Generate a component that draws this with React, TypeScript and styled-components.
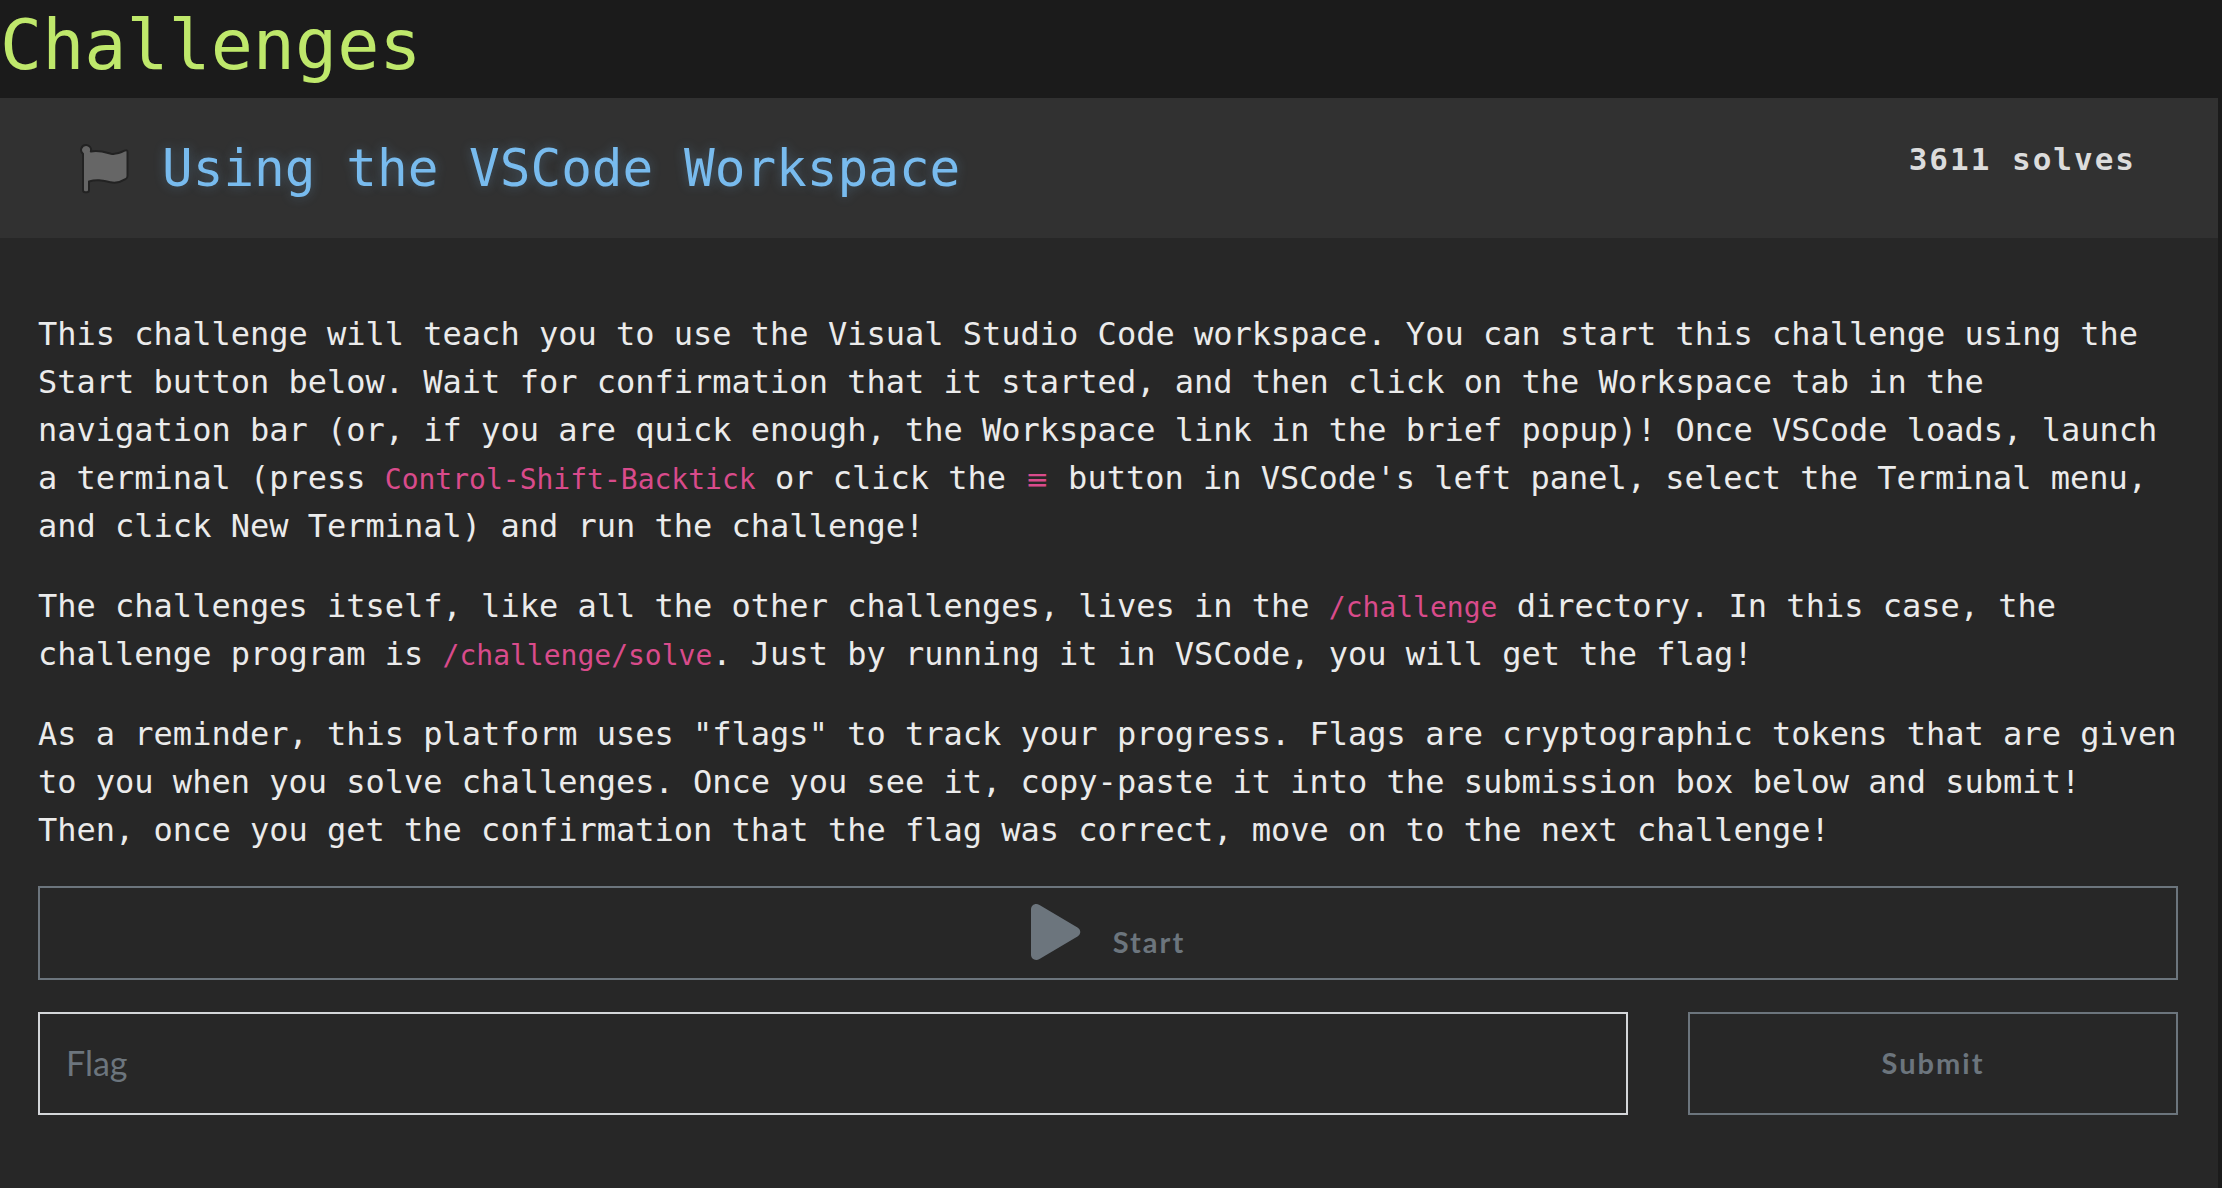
import React from "react";
import styled, { createGlobalStyle } from "styled-components";

const mono = `"DejaVu Sans Mono", "Liberation Mono", monospace`;
const sans = `Lato, "Open Sans", sans-serif`;

const GlobalStyle = createGlobalStyle`
  *, *::before, *::after { box-sizing: border-box; }
  body {
    margin: 0;
    background: #1b1b1b;
    color: #ebebeb;
    font-family: ${mono};
    font-size: 32px;
    line-height: 48px;
  }
`;

const Page = styled.main`
  min-height: 100vh;
  display: flex;
  flex-direction: column;
`;

const PageTitle = styled.h1`
  margin: 0;
  padding-bottom: 8px;
  color: #bfe86b;
  font-size: 70px;
  line-height: 90px;
  font-weight: 400;
`;

const Card = styled.article`
  flex: 1;
  margin-right: 4px;
  background: #272727;
`;

const CardHeader = styled.header`
  display: flex;
  align-items: flex-start;
  justify-content: space-between;
  padding: 41px 82px 39px 80px;
  background: #313131;
`;

const CardTitle = styled.h2`
  display: flex;
  align-items: center;
  gap: 32px;
  margin: 0;
  color: #78bbee;
  font-size: 51px;
  line-height: 60px;
  font-weight: 400;
  text-shadow: 0 0 12px rgba(120, 187, 238, 0.3);
`;

const Solves = styled.strong`
  color: #dcdcdc;
  font-size: 31px;
  line-height: 40px;
  letter-spacing: 2px;
`;

const CardBody = styled.div`
  padding: 72px 40px 72px 38px;
`;

const Paragraph = styled.p`
  margin: 0 0 32px;
`;

const Code = styled.code<{ $symbol?: boolean }>`
  color: #d94b8b;
  font-family: ${(p) => (p.$symbol ? `"DejaVu Sans", sans-serif` : mono)};
  font-size: 28px;
  line-height: 28px;
`;

const OutlineButton = styled.button<{ $tall?: boolean }>`
  display: flex;
  align-items: center;
  justify-content: center;
  gap: 32px;
  width: 100%;
  height: ${(p) => (p.$tall ? 103 : 94)}px;
  padding: 0 0 2px;
  border: 2px solid #6c757d;
  border-radius: 0;
  background: transparent;
  color: #6c757d;
  font-family: ${sans};
  font-size: 29px;
  font-weight: 700;
  letter-spacing: 2px;
  cursor: pointer;
`;

const ButtonLabel = styled.span`
  padding-top: 18px;
`;

const FormRow = styled.form`
  display: flex;
  margin: 32px -30px 0;
`;

const Column = styled.div<{ $share: number }>`
  width: ${(p) => p.$share}%;
  padding: 0 30px;
`;

const FlagInput = styled.input`
  width: 100%;
  height: 103px;
  padding: 0 26px 2px;
  border: 2px solid #d4d6d9;
  border-radius: 0;
  background: transparent;
  color: #ebebeb;
  font-family: ${sans};
  font-size: 34px;
  outline: none;
  &::placeholder { color: #6c757d; opacity: 1; }
`;

const FlagIcon = () => (
  <svg width="50" height="50" viewBox="0 0 50 50" aria-hidden="true">
    <path
      d="M6 1A4.900 4.900 0 0 1 10.800 7.500C18 5.500 25 8 31 9.700C36 10.500 40 9 44.500 6.700C46.500 5.700 47.500 6.300 47.500 8V32C47.500 33.800 47 34.500 45.500 35.200C41 38 36 39.500 30.500 38.300C22 36.500 17 35.200 9 37.500V46C9 47.500 8 48.200 6.800 48.200H5.200C4 48.200 3 47.500 3 46V9.800A4.900 4.900 0 0 1 6 1Z"
      fill="#666"
      stroke="#222"
      strokeWidth="2"
      strokeLinejoin="round"
    />
  </svg>
);

const PlayIcon = () => (
  <svg width="50" height="56" viewBox="0 0 50 56" aria-hidden="true">
    <path
      d="M0 5.500C0 1 4.500-1.400 8.500 1L46.500 23.500C50.200 25.700 50.200 30.300 46.500 32.500L8.500 55C4.500 57.400 0 55 0 50.500Z"
      fill="#6c757d"
    />
  </svg>
);

export default function App() {
  return (
    <>
      <GlobalStyle />
      <Page>
        <PageTitle>Challenges</PageTitle>
        <Card>
          <CardHeader>
            <CardTitle>
              <FlagIcon />
              Using the VSCode Workspace
            </CardTitle>
            <Solves>3611 solves</Solves>
          </CardHeader>
          <CardBody>
            <Paragraph>
              This challenge will teach you to use the Visual Studio Code workspace. You can start
              this challenge using the Start button below. Wait for confirmation that it started,
              and then click on the Workspace tab in the navigation bar (or, if you are quick
              enough, the Workspace link in the brief popup)! Once VSCode loads, launch a terminal
              (press <Code>Control-Shift-Backtick</Code> or click the <Code $symbol>≡</Code> button
              in VSCode's left panel, select the Terminal menu, and click New Terminal) and run the
              challenge!
            </Paragraph>
            <Paragraph>
              The challenges itself, like all the other challenges, lives in the{" "}
              <Code>/challenge</Code> directory. In this case, the challenge program is{" "}
              <Code>/challenge/solve</Code>. Just by running it in VSCode, you will get the flag!
            </Paragraph>
            <Paragraph>
              As a reminder, this platform uses "flags" to track your progress. Flags are
              cryptographic tokens that are given to you when you solve challenges. Once you see
              it, copy-paste it into the submission box below and submit! Then, once you get the
              confirmation that the flag was correct, move on to the next challenge!
            </Paragraph>
            <OutlineButton type="button">
              <PlayIcon />
              <ButtonLabel>Start</ButtonLabel>
            </OutlineButton>
            <FormRow onSubmit={(e) => e.preventDefault()}>
              <Column $share={75}>
                <FlagInput type="text" name="flag" placeholder="Flag" aria-label="Flag" />
              </Column>
              <Column $share={25}>
                <OutlineButton type="submit" $tall>
                  Submit
                </OutlineButton>
              </Column>
            </FormRow>
          </CardBody>
        </Card>
      </Page>
    </>
  );
}
